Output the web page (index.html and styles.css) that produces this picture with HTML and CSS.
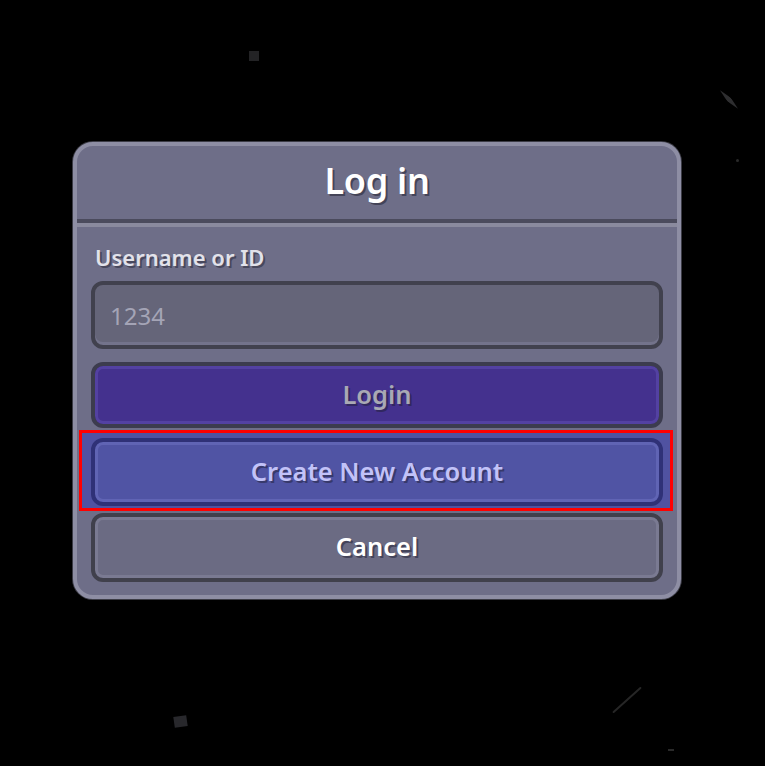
FILE: index.html
```html
<!DOCTYPE html>
<html>
<head>
<meta charset="utf-8">
<title>Log in</title>
<link rel="stylesheet" href="styles.css">
</head>
<body>
<div class="scene">
  <div class="particle p1"></div>
  <div class="particle p2"></div>
  <div class="particle p3"></div>
  <div class="particle p4"></div>
  <div class="particle p5"></div>
  <div class="particle p6"></div>
  <div class="panel">
    <div class="header"><h1 class="title">Log in</h1></div>
    <div class="body">
      <label class="label" for="user">Username or ID</label>
      <input class="input" id="user" type="text" placeholder="1234">
      <button class="btn btn-login">Login</button>
      <div class="highlight"><button class="btn btn-create">Create New Account</button></div>
      <button class="btn btn-cancel">Cancel</button>
    </div>
  </div>
</div>
</body>
</html>
```
FILE: styles.css
```css
html, body {
  margin: 0;
  padding: 0;
  background: #000;
  width: 765px;
  height: 766px;
  overflow: hidden;
}
.scene {
  position: relative;
  width: 765px;
  height: 766px;
  padding: 142px 0 0 73px;
  box-sizing: border-box;
  font-family: "Noto Sans", "Open Sans", sans-serif;
}
.particle {
  position: absolute;
  background: #262628;
}
.p1 { left: 249px; top: 51px; width: 10px; height: 10px; background: #232325; }
.p2 { left: 716px; top: 97px; width: 26px; height: 5px; transform: rotate(46deg); clip-path: polygon(0 50%, 50% 0, 100% 50%, 50% 100%); background: #2e2e30; }
.p3 { left: 736px; top: 159px; width: 3px; height: 3px; border-radius: 50%; background: #2a2a2a; }
.p4 { left: 174px; top: 716px; width: 13px; height: 11px; transform: rotate(-8deg); background: #28282c; }
.p5 { left: 608px; top: 699px; width: 38px; height: 2px; transform: rotate(-42deg); background: #262626; border-radius: 1px; }
.p6 { left: 668px; top: 749px; width: 6px; height: 2px; background: #2a2a2a; }

.panel {
  position: relative;
  width: 608px;
  box-sizing: border-box;
  background: #6e6e88;
  border: 4px solid #8e8ea4;
  border-radius: 20px;
  box-shadow: 0 0 0 1px #3c3c46;
}
.header {
  height: 77px;
  display: flex;
  align-items: center;
  justify-content: center;
  border-bottom: 4px solid #4b4b5d;
  padding-bottom: 4px;
  box-sizing: border-box;
}
.title {
  margin: 0;
  font-size: 36px;
  line-height: 44px;
  font-weight: 600;
  color: #ffffff;
  letter-spacing: -0.3px;
  text-shadow: 2px 2px 0 rgba(40, 40, 56, 0.6);
}
.body {
  border-top: 4px solid #8a8a9e;
  padding: 17px 14px 13px 14px;
  display: flex;
  flex-direction: column;
}
.label {
  display: block;
  height: 28px;
  line-height: 26px;
  padding-left: 4px;
  font-size: 22px;
  font-weight: 600;
  color: #e2e2ea;
  text-shadow: 2px 2px 0 rgba(40, 40, 56, 0.55);
}
.input {
  margin-top: 9px;
  height: 68px;
  box-sizing: border-box;
  border: 4px solid #41414e;
  border-radius: 12px;
  background: #656579;
  box-shadow: inset 0 -3px 0 #73738b;
  padding: 0 15px;
  font-family: "Noto Sans", "Open Sans", sans-serif;
  font-size: 24px;
  color: #ffffff;
  outline: none;
}
.input::placeholder {
  color: #a4a4b6;
  font-weight: 400;
}
.btn {
  display: block;
  width: 100%;
  box-sizing: border-box;
  border-radius: 12px;
  font-family: "Noto Sans", "Open Sans", sans-serif;
  font-size: 25.5px;
  font-weight: 600;
  padding: 0 0 3px 0;
  cursor: pointer;
  text-shadow: 2px 2px 0 rgba(30, 30, 50, 0.5);
}
.btn-login {
  margin-top: 13px;
  height: 66px;
  border: 4px solid #3c3c4e;
  background: #44318e;
  box-shadow: inset 0 0 0 3px #5341a2;
  color: #a9a9b4;
}
.highlight {
  position: relative;
  margin-top: 10px;
}
.highlight::before {
  content: "";
  position: absolute;
  left: -12px;
  right: -10px;
  top: -8px;
  bottom: -5px;
  background: #5052a1;
  border: 3px solid #ff0000;
}
.btn-create {
  position: relative;
  height: 68px;
  border: 4px solid #2f3177;
  background: #5054a4;
  box-shadow: inset 0 0 0 3px #6064b4;
  color: #c2c2f8;
}
.btn-cancel {
  margin-top: 7px;
  height: 69px;
  border: 4px solid #40404c;
  background: #6b6b83;
  box-shadow: inset 0 0 0 3px #7a7a92;
  color: #ffffff;
}
```
